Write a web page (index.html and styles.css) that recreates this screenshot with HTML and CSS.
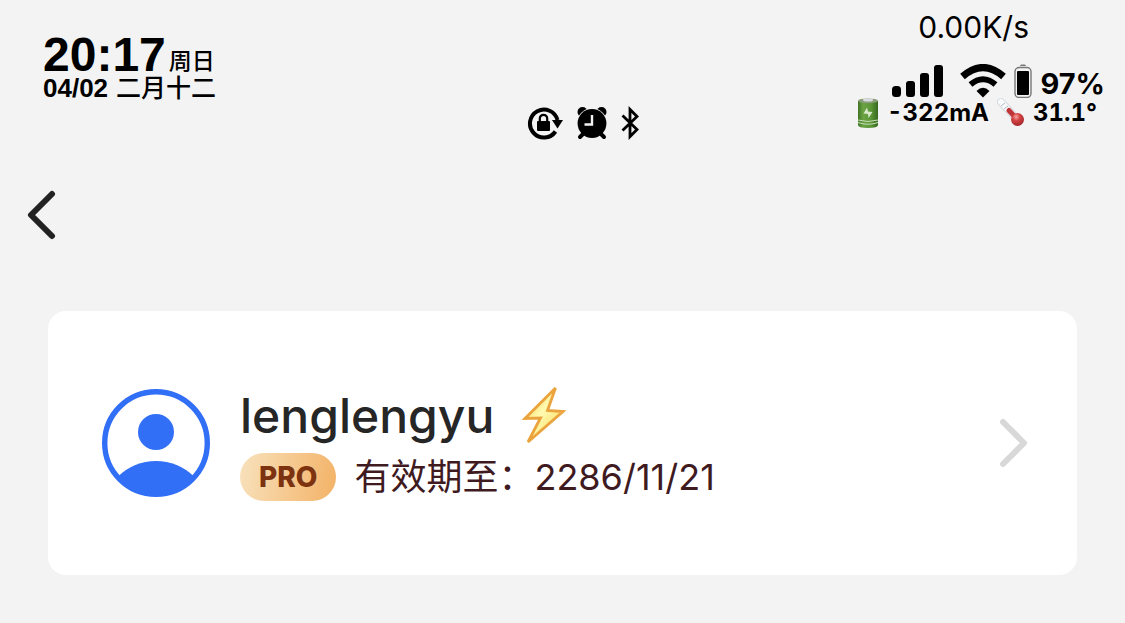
FILE: index.html
```
<!DOCTYPE html>
<html lang="zh-CN">
<head>
  <meta charset="UTF-8">
  <meta name="viewport" content="width=device-width, initial-scale=1.0">
  <title>账户</title>
  <link rel="stylesheet" href="styles.css">
</head>
<body>
  <!-- 状态栏 -->
  <header class="status">
    <div class="clock">
      <div class="clock-row"><span class="time">20:17</span><span class="weekday">周日</span></div>
      <div class="date"><span>04/02</span><span class="lunar">二月十二</span></div>
    </div>

    <div class="indicators">
      <svg class="icon-lock" viewBox="0 0 36 34">
        <path d="M28.5 25.5A14 14 0 1 1 30.5 14" fill="none" stroke="#000" stroke-width="4"/>
        <path d="M25 14H36L30.5 22.5Z"/>
        <rect x="10" y="15" width="13" height="10" rx="1"/>
        <path d="M12.8 16V12.5a3.7 3.7 0 0 1 7.4 0V16" fill="none" stroke="#000" stroke-width="2.2"/>
      </svg>
      <svg class="icon-alarm" viewBox="0 0 32 34">
        <circle cx="6.5" cy="6" r="5"/>
        <circle cx="25.5" cy="6" r="5"/>
        <circle cx="16" cy="17.5" r="15.2" fill="#f3f3f3"/>
        <circle cx="16" cy="17.5" r="14.4"/>
        <path d="M7 28l-3 3M25 28l3 3" stroke="#000" stroke-width="4" stroke-linecap="round"/>
        <path d="M16 9v9.5H8.5" fill="none" stroke="#f3f3f3" stroke-width="2.4"/>
      </svg>
      <svg class="icon-bluetooth" viewBox="0 0 18 34">
        <path d="M1.5 9.5L16 23.5L9 30.5V3.5L16 10.5L1.5 24.5" fill="none" stroke="#000" stroke-width="2.8"/>
      </svg>
    </div>

    <div class="system">
      <div class="rate">0.00K/s</div>
      <div class="system-row">
        <svg class="icon-signal" viewBox="0 0 52 34">
          <rect x="0" y="22" width="9" height="11" rx="3.5"/>
          <rect x="14" y="17" width="9" height="16" rx="3"/>
          <rect x="28" y="9" width="9" height="24" rx="3"/>
          <rect x="42" y="1" width="9" height="32" rx="3"/>
        </svg>
        <svg class="icon-wifi" viewBox="0 0 46 34">
          <path d="M2.5 12.5Q23-5.5 43.5 12.5" fill="none" stroke="#000" stroke-width="7"/>
          <path d="M10.5 20.5Q23 10 35.5 20.5" fill="none" stroke="#000" stroke-width="6"/>
          <path d="M16.5 27Q23 20.5 29.5 27L23 33.5Z"/>
        </svg>
        <svg class="icon-battery" viewBox="0 0 18 34">
          <path d="M6 2Q6 .5 7.5 .5H10.5Q12 .5 12 2Z" fill="#777"/>
          <rect x="1" y="3.5" width="16" height="30" rx="4" fill="none" stroke="#777" stroke-width="1.4"/>
          <rect x="3" y="7" width="12" height="24" rx="1"/>
        </svg>
        <span class="percent">97%</span>
      </div>
      <div class="system-row system-detail">
        <svg class="icon-cell" viewBox="0 0 22 30">
          <defs>
            <linearGradient id="cell" x1="0" x2="1" y1="0" y2="0">
              <stop offset="0" stop-color="#3f7424"/>
              <stop offset=".25" stop-color="#6ba344"/>
              <stop offset=".65" stop-color="#5b9637"/>
              <stop offset="1" stop-color="#36691e"/>
            </linearGradient>
          </defs>
          <path d="M1 3V27Q1 30 11 30T21 27V3Z" fill="url(#cell)"/>
          <ellipse cx="11" cy="2.8" rx="10" ry="2.4" fill="#8b9d7b"/>
          <ellipse cx="11" cy="2" rx="5" ry="1.5" fill="#d8dce2"/>
          <path d="M1 22Q11 25 21 22M1 24.5Q11 28 21 24.5" fill="none" stroke="#c8dfb7" stroke-width="1"/>
          <path d="M10 9.5L6.5 15.5L11 16L11.5 20L15.5 14L11 13.5Z" fill="#d7e8cb"/>
        </svg>
        <span class="current">-322mA</span>
        <svg class="icon-thermo" viewBox="0 0 28 30">
          <defs>
            <radialGradient id="bulb" cx=".4" cy=".3" r=".7">
              <stop offset="0" stop-color="#f7a7a4"/>
              <stop offset=".4" stop-color="#d54545"/>
              <stop offset="1" stop-color="#a52529"/>
            </radialGradient>
          </defs>
          <path d="M4 4L19 20" stroke="#d5dbe0" stroke-width="8" stroke-linecap="round"/>
          <path d="M4 4L19 20" stroke="#f8fafb" stroke-width="6" stroke-linecap="round"/>
          <path d="M4 8l4-3M7 11l4-3M10 14l3-2" stroke="#b4bbc1" stroke-width="1"/>
          <path d="M12 12.5L20 21" stroke="#be3438" stroke-width="5" stroke-linecap="round"/>
          <circle cx="20.5" cy="21.5" r="6.5" fill="url(#bulb)"/>
        </svg>
        <span class="temperature">31.1°</span>
      </div>
    </div>
  </header>

  <nav class="nav">
    <button class="back" type="button" aria-label="返回">
      <svg class="icon-back" viewBox="0 0 30 50">
        <path d="M26 4L5 25L26 46" fill="none" stroke="#222" stroke-width="6" stroke-linecap="round" stroke-linejoin="round"/>
      </svg>
    </button>
  </nav>

  <main class="content">
    <a class="card" href="#">
      <svg class="avatar" viewBox="0 0 108 108">
        <defs>
          <clipPath id="face"><circle cx="54" cy="54" r="53"/></clipPath>
        </defs>
        <circle cx="54" cy="54" r="51.3" fill="#fff" stroke="#316ff6" stroke-width="5.4"/>
        <circle cx="54" cy="43" r="18" fill="#316ff6"/>
        <circle cx="54" cy="126" r="54" fill="#316ff6" clip-path="url(#face)"/>
      </svg>
      <div class="profile">
        <div class="name">
          <span>lenglengyu</span>
          <svg class="icon-bolt" viewBox="0 0 44 62">
            <defs>
              <linearGradient id="bolt" x1="0" x2="1" y1="0" y2="1">
                <stop offset="0" stop-color="#fbc94a"/>
                <stop offset=".45" stop-color="#fffbb0"/>
                <stop offset="1" stop-color="#fbcd48"/>
              </linearGradient>
            </defs>
            <path d="M33.5 3L3 33.5L18.500 33L6 57L41 26.5L25.500 25.5Z" fill="url(#bolt)" stroke="#eba43d" stroke-width="2.8"/>
          </svg>
        </div>
        <div class="plan">
          <span class="badge">PRO</span>
          <span class="expiry">有效期至：2286/11/21</span>
        </div>
      </div>
      <svg class="icon-next" viewBox="0 0 30 50">
        <path d="M4 4L25 25L4 46" fill="none" stroke="#d8d8d8" stroke-width="6" stroke-linecap="round" stroke-linejoin="round"/>
      </svg>
    </a>
  </main>
</body>
</html>
```

FILE: styles.css
```
* {
  box-sizing: border-box;
}
body {
  margin: 0;
  min-height: 100vh;
  background-color: #f3f3f3;
  color: #000;
  font-family: Inter, "Noto Sans CJK SC", sans-serif;
}
svg {
  display: block;
  flex: none;
}

/* 状态栏 */
.status {
  display: grid;
  grid-template-columns: 1fr auto 1fr;
  padding: 8px 20px 0 43px;
}
.clock {
  padding-top: 27px;
  font-family: "Liberation Sans", "Noto Sans CJK SC", sans-serif;
  font-weight: 700;
  white-space: nowrap;
}
.clock-row {
  display: flex;
  align-items: flex-end;
  gap: 3px;
}
.time {
  font-size: 48px;
  line-height: 40px;
}
.weekday {
  font-size: 23px;
  font-weight: 500;
  line-height: 28px;
}
.date {
  display: flex;
  gap: 8px;
  font-size: 26px;
  line-height: 26px;
}
.lunar {
  font-size: 25px;
  font-weight: 500;
}
.indicators {
  display: flex;
  align-items: center;
  align-self: end;
  gap: 13px;
  margin-left: 18px;
}
.icon-lock {
  width: 36px;
  height: 34px;
}
.icon-alarm {
  width: 32px;
  height: 34px;
}
.icon-bluetooth {
  width: 18px;
  height: 34px;
}
.system {
  display: flex;
  flex-direction: column;
  align-items: flex-end;
  height: 132px;
  white-space: nowrap;
}
.rate {
  margin-right: 76px;
  font-size: 30px;
  line-height: 38px;
}
.system-row {
  display: flex;
  align-items: flex-end;
  gap: 8px;
  margin-top: 18px;
}
.icon-signal {
  width: 52px;
  height: 34px;
  margin-right: 8px;
}
.icon-wifi {
  width: 46px;
  height: 34px;
}
.icon-battery {
  width: 18px;
  height: 34px;
}
.percent {
  font-size: 29px;
  font-weight: 700;
  line-height: 28px;
}
.system-detail {
  align-items: center;
  margin-top: 0;
  margin-right: 8px;
  font-size: 24px;
  font-weight: 700;
  font-variant-numeric: tabular-nums;
  line-height: 28px;
}
.icon-cell {
  width: 22px;
  height: 30px;
}
.icon-thermo {
  width: 28px;
  height: 30px;
}

/* 导航 */
.nav {
  display: flex;
  padding: 50px 26px 0;
}
.back {
  padding: 0;
  border: 0;
  background: none;
  cursor: pointer;
}
.icon-back,
.icon-next {
  width: 30px;
  height: 50px;
}

/* 账户卡片 */
.content {
  padding: 71px 48px 48px;
}
.card {
  display: flex;
  align-items: center;
  gap: 30px;
  min-height: 264px;
  padding: 48px 48px 48px 54px;
  border-radius: 18px;
  background-color: #fff;
  color: #262626;
  text-decoration: none;
}
.avatar {
  width: 108px;
  height: 108px;
}
.profile {
  flex: 1;
}
.name {
  display: flex;
  align-items: center;
  gap: 28px;
  font-size: 48px;
  font-weight: 500;
  line-height: 62px;
}
.icon-bolt {
  width: 44px;
  height: 62px;
}
.plan {
  display: flex;
  align-items: center;
  gap: 18px;
  margin-top: 6px;
}
.badge {
  padding: 0 19px;
  border-radius: 24px;
  background: linear-gradient(100deg, #f8e2bd, #f3b266);
  color: #7d3210;
  font-size: 28px;
  font-weight: 800;
  line-height: 48px;
}
.expiry {
  color: #3f1a1f;
  font-size: 36px;
  line-height: 48px;
}
```
